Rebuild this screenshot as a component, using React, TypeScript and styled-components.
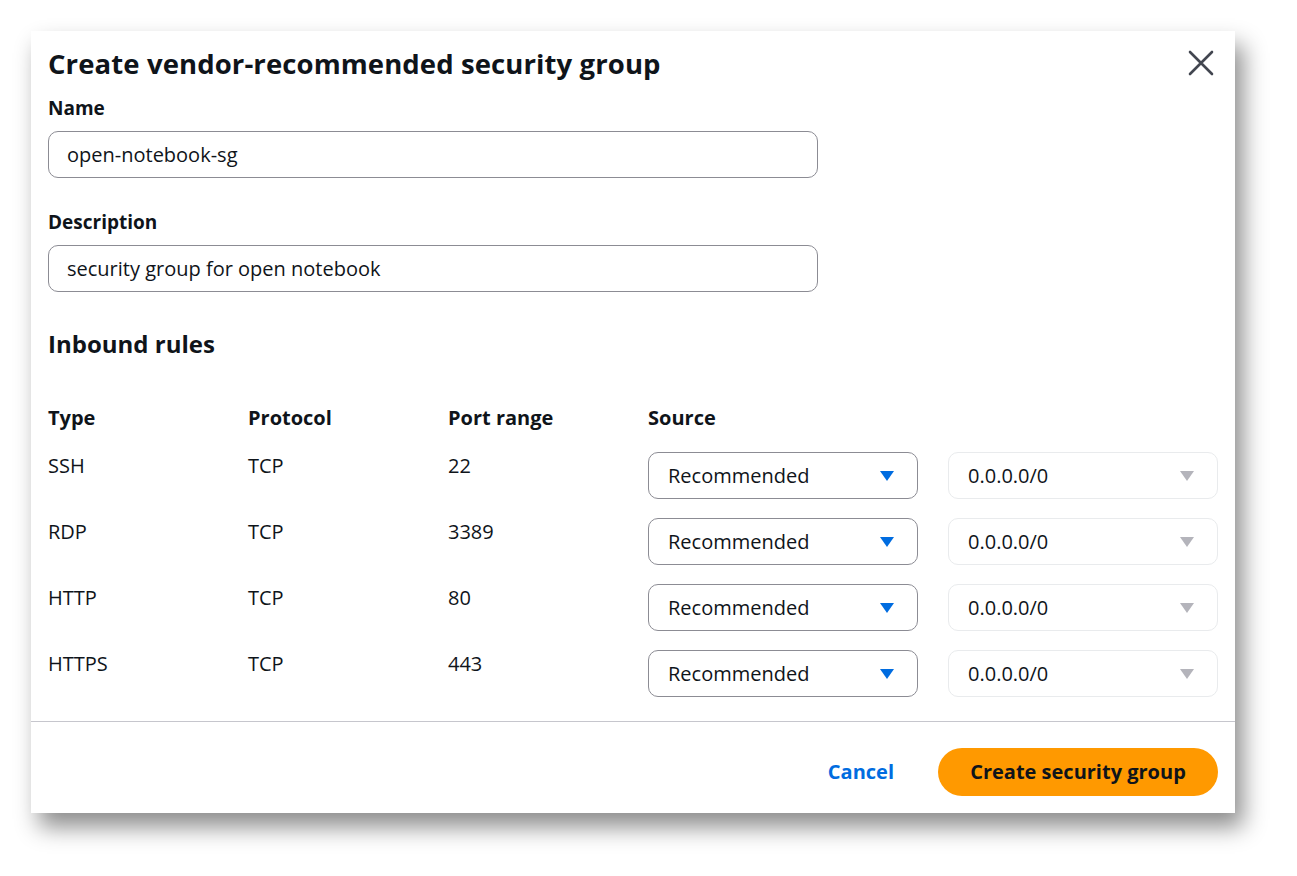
import React from 'react';
import styled, { createGlobalStyle } from 'styled-components';

const GlobalStyle = createGlobalStyle`
    body {
        margin: 0;
        background: #ffffff;
        font-family: 'Open Sans', 'Noto Sans', sans-serif;
        color: #0f141a;
    }
`;

const RULES = [
    { type: 'SSH', protocol: 'TCP', port: '22' },
    { type: 'RDP', protocol: 'TCP', port: '3389' },
    { type: 'HTTP', protocol: 'TCP', port: '80' },
    { type: 'HTTPS', protocol: 'TCP', port: '443' },
];

const Caret: React.FC<{ $muted?: boolean }> = ({ $muted }) => (
    <svg width="16" height="12" viewBox="0 0 16 12">
        <path d="M1 1 L15 1 L8 11 Z" fill={$muted ? '#b4b4bb' : '#006ce0'} />
    </svg>
);

const App: React.FC = () => {
    return (
        <Page>
            <GlobalStyle />
            <Modal>
                <Header>
                    <Title>Create vendor-recommended security group</Title>
                    <CloseButton aria-label="Close">
                        <svg width="26" height="26" viewBox="0 0 26 26">
                            <path d="M2 2 L24 24 M24 2 L2 24" stroke="#424650" strokeWidth="2.6" strokeLinecap="round" />
                        </svg>
                    </CloseButton>
                </Header>
                <Field>
                    <Label>Name</Label>
                    <Input>open-notebook-sg</Input>
                </Field>
                <Field $spaced>
                    <Label>Description</Label>
                    <Input>security group for open notebook</Input>
                </Field>
                <SectionTitle>Inbound rules</SectionTitle>
                <Table>
                    <HeadCell>Type</HeadCell>
                    <HeadCell>Protocol</HeadCell>
                    <HeadCell>Port range</HeadCell>
                    <HeadCell>Source</HeadCell>
                    <HeadCell />
                    {RULES.map((r) => (
                        <React.Fragment key={r.type}>
                            <Cell>{r.type}</Cell>
                            <Cell>{r.protocol}</Cell>
                            <Cell>{r.port}</Cell>
                            <Select>
                                Recommended
                                <Caret />
                            </Select>
                            <Select $disabled>
                                0.0.0.0/0
                                <Caret $muted />
                            </Select>
                        </React.Fragment>
                    ))}
                </Table>
                <Footer>
                    <LinkButton>Cancel</LinkButton>
                    <PrimaryButton>Create security group</PrimaryButton>
                </Footer>
            </Modal>
        </Page>
    );
};

const Page = styled.div`
    padding: 31px 0 0 31px;
    height: 876px;
    box-sizing: border-box;
`;

const Modal = styled.div`
    width: 1204px;
    height: 782px;
    background: #ffffff;
    box-shadow: 8px 14px 22px rgba(0, 0, 0, 0.45);
    box-sizing: border-box;
    padding: 0 17px;
    display: flex;
    flex-direction: column;
`;

const Header = styled.div`
    display: flex;
    justify-content: space-between;
    align-items: center;
    height: 64px;
`;

const Title = styled.h1`
    margin: 0;
    font-size: 27.5px;
    font-weight: 700;
    letter-spacing: 0.1px;
`;

const CloseButton = styled.button`
    background: none;
    border: none;
    padding: 0;
    margin-right: 4px;
    display: flex;
`;

const Field = styled.div<{ $spaced?: boolean }>`
    display: flex;
    flex-direction: column;
    margin-top: ${(p) => (p.$spaced ? '31px' : '0')};
`;

const Label = styled.label`
    font-size: 19px;
    font-weight: 700;
    line-height: 26px;
    margin-bottom: 10px;
`;

const Input = styled.div`
    width: 770px;
    height: 47px;
    box-sizing: border-box;
    border: 1px solid #8c8c94;
    border-radius: 10px;
    padding: 0 18px;
    display: flex;
    align-items: center;
    font-size: 20px;
`;

const SectionTitle = styled.h2`
    margin: 35px 0 0;
    font-size: 24px;
    font-weight: 700;
    line-height: 34px;
`;

const Table = styled.div`
    display: grid;
    grid-template-columns: 200px 200px 200px 300px 270px;
    grid-template-rows: 48px;
    grid-auto-rows: 66px;
    margin-top: 43px;
`;

const HeadCell = styled.div`
    font-size: 20px;
    font-weight: 700;
    line-height: 28px;
`;

const Cell = styled.div`
    font-size: 20px;
    line-height: 28px;
`;

const Select = styled.div<{ $disabled?: boolean }>`
    width: 270px;
    height: 47px;
    box-sizing: border-box;
    border: 1px solid ${(p) => (p.$disabled ? '#e9ebed' : '#8c8c94')};
    border-radius: 10px;
    padding: 0 22px 0 19px;
    display: flex;
    align-items: center;
    justify-content: space-between;
    font-size: 20px;
`;

const Footer = styled.div`
    margin: 5px -17px 0;
    border-top: 1px solid #c6c6cd;
    flex: 1;
    display: flex;
    justify-content: flex-end;
    align-items: center;
    gap: 44px;
    padding: 8px 17px 0;
`;

const LinkButton = styled.button`
    background: none;
    border: none;
    color: #006ce0;
    font-family: inherit;
    font-size: 20px;
    font-weight: 700;
    padding: 0;
`;

const PrimaryButton = styled.button`
    background: #ff9900;
    border: none;
    border-radius: 24px;
    width: 280px;
    height: 48px;
    font-family: inherit;
    font-size: 20px;
    font-weight: 700;
    color: #0f141a;
`;

export default App;
